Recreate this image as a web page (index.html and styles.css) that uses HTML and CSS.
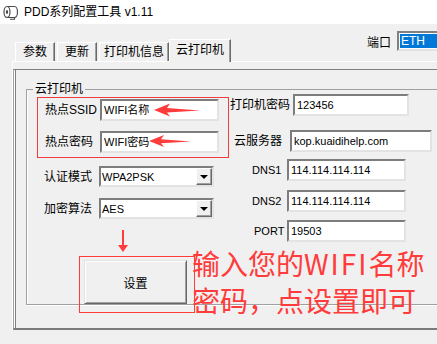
FILE: index.html
```html
<!DOCTYPE html>
<html lang="zh-CN">
<head>
  <meta charset="UTF-8">
  <title>PDD系列配置工具 v1.11</title>
  <link rel="stylesheet" href="styles.css">
</head>
<body>
  <div class="window">
    <div class="titlebar">
      <svg class="app-icon" viewBox="0 0 17 16" width="17" height="16">
        <path d="M5 2.5 H12.5 A3 5.5 0 0 1 12.5 13.5 H5" fill="#fff" stroke="#4a4a4a" stroke-width="1.2"/>
        <ellipse cx="5" cy="8" rx="3" ry="5.5" fill="#fff" stroke="#4a4a4a" stroke-width="1.2"/>
        <ellipse cx="5" cy="8" rx="1.1" ry="2" fill="#4a4a4a"/>
        <path d="M12.5 13.5 V15.2 H8" fill="none" stroke="#4a4a4a" stroke-width="1.1"/>
      </svg>
      <span class="title">PDD系列配置工具 v1.11</span>
    </div>

    <div class="tabbar">
      <div class="tabs">
        <div class="tab tab-short">参数</div>
        <div class="tab tab-short">更新</div>
        <div class="tab tab-info">打印机信息</div>
        <div class="tab active">云打印机</div>
      </div>
      <div class="port">
        <span class="port-label">端口</span>
        <div class="port-box"><span class="port-sel">ETH</span></div>
      </div>
    </div>

    <div class="page">
      <div class="inner">
        <fieldset class="group">
          <legend>云打印机</legend>
          <div class="cols">
            <div class="col-left">
              <div class="hotspot">
                <div class="row"><label>热点SSID</label><div class="edit">WIFI名称</div></div>
                <div class="row"><label>热点密码</label><div class="edit">WIFI密码</div></div>
              </div>
              <div class="row row-combo">
                <label>认证模式</label>
                <div class="combo"><span>WPA2PSK</span><i class="drop"></i></div>
              </div>
              <div class="row row-combo">
                <label>加密算法</label>
                <div class="combo"><span>AES</span><i class="drop"></i></div>
              </div>
              <button class="btn-set">设置</button>
            </div>

            <div class="col-right">
              <div class="row f-pwd"><label>打印机密码</label><div class="edit">123456</div></div>
              <div class="row f-srv"><label>云服务器</label><div class="edit">kop.kuaidihelp.com</div></div>
              <div class="row f-dns"><label class="latin">DNS1</label><div class="edit">114.114.114.114</div></div>
              <div class="row f-dns f-dns2"><label class="latin">DNS2</label><div class="edit">114.114.114.114</div></div>
              <div class="row f-port"><label class="latin">PORT</label><div class="edit">19503</div></div>
            </div>
          </div>
        </fieldset>
      </div>
    </div>

    <!-- red annotations drawn over the form -->
    <svg class="mark mark-arrow1" viewBox="0 0 48 14" width="48" height="14">
      <path d="M0 7 L16 0.5 L13 5 L46 7.5 L13 9.5 L16 13.5 Z" fill="#ff3b3b"/>
    </svg>
    <svg class="mark mark-arrow2" viewBox="0 0 44 14" width="44" height="14">
      <path d="M0 7 L15 1 L12 5.2 L42 7.5 L12 9.3 L15 13 Z" fill="#ff3b3b"/>
    </svg>
    <svg class="mark mark-down" viewBox="0 0 10 23" width="10" height="23">
      <path d="M4 0 H6 V15 H10 L5 22 L0 15 H4 Z" fill="#ff3b3b"/>
    </svg>
    <div class="mark mark-box"></div>
    <div class="mark note">输入您的<span class="wide">WIFI</span>名称<br>密码，点设置即可</div>
  </div>
</body>
</html>
```

FILE: styles.css
```css
* {
  box-sizing: border-box;
  margin: 0;
  padding: 0;
}

body {
  width: 437px;
  height: 344px;
  overflow: hidden;
  background: #f0f0f0;
  color: #000;
  font-family: "Liberation Sans", "Noto Sans CJK SC", sans-serif;
  font-size: 12px;
}

.window {
  position: relative;
  width: 437px;
  height: 344px;
  overflow: hidden;
  background: #f0f0f0;
}

/* title */
.titlebar {
  height: 24px;
  background: #fff;
  display: flex;
  align-items: center;
  gap: 5px;
  padding-left: 2px;
}

.title {
  line-height: 16px;
}

/* tabs */
.tabbar {
  height: 37px;
  display: flex;
}

.tabs {
  display: flex;
  align-items: flex-end;
  gap: 2px;
  margin-left: 15px;
}

.tab {
  height: 19px;
  display: flex;
  align-items: center;
  justify-content: center;
  line-height: 14px;
  border-top: 1px solid #fff;
  border-left: 1px solid #fff;
  border-right: 1px solid #696969;
  box-shadow: inset -1px 0 0 #a0a0a0;
}

.tab-short { width: 40px; }
.tab-info { width: 70px; }

.tab.active {
  width: 62px;
  height: 23px;
  margin-left: -2px;
  margin-bottom: -1px;
  padding-bottom: 3px;
  background: #f0f0f0;
  position: relative;
  z-index: 1;
}

.port {
  flex: 1;
  display: flex;
  align-items: center;
  height: 20px;
  margin: 7px 0 0 136px;
}

.port-label { width: 30px; }

.port-box {
  flex: 1;
  height: 20px;
  padding: 1px 0 1px 1px;
  background: #fff;
  border: 2px solid;
  border-right: none;
  border-color: #808080 #e3e3e3 #e3e3e3 #808080;
}

.port-sel {
  display: block;
  height: 14px;
  line-height: 14px;
  padding-left: 1px;
  background: #0078d7;
  color: #fff;
}

/* page */
.page {
  margin-left: 12px;
  padding-top: 7px;
  border-top: 1px solid #fff;
  border-left: 1px solid #fff;
}

.inner {
  height: 261px;
  border-top: 1px solid #808080;
  border-left: 1px solid #a0a0a0;
  border-bottom: 2px solid #7a7a7a;
  box-shadow: inset 1px 0 0 #fff, inset 2px 0 0 #808080;
}

.group {
  height: 221px;
  margin: 14px 0 0 12px;
  border: 1px solid #a0a0a0;
  border-right: none;
  box-shadow: 0 1px 0 #fff, inset 1px 0 0 #fff;
  min-width: 0;
}

.group legend {
  margin-left: 6px;
  padding: 0 2px;
  line-height: 10px;
}

.cols {
  display: grid;
  grid-template-columns: 193px 1fr;
  padding-left: 10px;
}

.row {
  display: flex;
  align-items: center;
}

.row label {
  width: 55px;
  line-height: 14px;
}

.row label.latin {
  font-size: 11px;
}

.edit {
  height: 22px;
  padding-left: 2px;
  background: #fff;
  border: 2px solid;
  border-color: #7d7d7d #e3e3e3 #e3e3e3 #7d7d7d;
  font-size: 11px;
  line-height: 18px;
  white-space: nowrap;
}

/* left column */
.col-left {
  display: flex;
  flex-direction: column;
  align-items: flex-start;
}

.hotspot {
  width: 192px;
  margin-top: 3px;
  padding: 1px 0 4px 7px;
  border: 1px solid #f03c3c;
  display: flex;
  flex-direction: column;
  gap: 10px;
}

.hotspot .edit { width: 119px; }

.row-combo {
  margin-top: 8px;
  padding-left: 7px;
}

.row-combo + .row-combo { margin-top: 11px; }

.combo {
  width: 115px;
  height: 21px;
  display: flex;
  align-items: center;
  justify-content: space-between;
  padding-left: 1px;
  background: #fff;
  border: 2px solid;
  border-color: #7d7d7d #e3e3e3 #e3e3e3 #7d7d7d;
  font-size: 11px;
}

.drop {
  width: 16px;
  height: 17px;
  display: flex;
  align-items: center;
  justify-content: center;
  background: #f0f0f0;
  border: 1px solid;
  border-color: #fff #696969 #696969 #fff;
  box-shadow: inset -1px -1px 0 #a0a0a0;
}

.drop::after {
  content: "";
  border-left: 4px solid transparent;
  border-right: 4px solid transparent;
  border-top: 4px solid #000;
}

.btn-set {
  width: 103px;
  height: 44px;
  margin: 41px 0 0 47px;
  background: #f0f0f0;
  border: 1px solid;
  border-color: #e3e3e3 #696969 #696969 #e3e3e3;
  box-shadow: inset 1px 1px 0 #fff, inset -1px -1px 0 #a0a0a0;
  font-family: inherit;
  font-size: 12px;
  color: #000;
}

/* right column */
.col-right {
  display: flex;
  flex-direction: column;
}

.f-pwd label { width: 63px; }
.f-pwd .edit { width: 116px; }

.f-srv { margin-top: 14px; }
.f-srv label { width: 56px; margin-left: 4px; }
.f-srv .edit { width: 142px; }

.f-dns { margin-top: 7px; }
.f-dns2 { margin-top: 9px; }
.f-dns label { width: 35px; margin-left: 22px; }

.f-port { margin-top: 8px; }
.f-port label { width: 33px; margin-left: 24px; }

.f-dns .edit,
.f-port .edit { width: 119px; }

/* annotations */
.mark {
  position: absolute;
}

.mark-arrow1 { left: 154px; top: 103px; }
.mark-arrow2 { left: 149px; top: 134px; }
.mark-down { left: 118px; top: 230px; }

.mark-box {
  left: 79px;
  top: 256px;
  width: 116px;
  height: 57px;
  border: 1px solid #ff3b3b;
}

.note {
  left: 192px;
  top: 245px;
  font-family: "Noto Sans CJK SC", sans-serif;
  font-size: 28px;
  line-height: 37px;
  color: #ff3b3b;
  white-space: nowrap;
}

.note .wide {
  letter-spacing: 2px;
}
```
